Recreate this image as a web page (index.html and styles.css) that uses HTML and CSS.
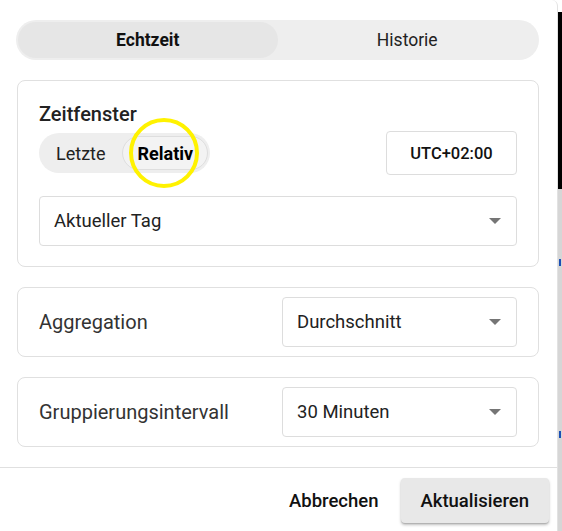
FILE: index.html
```html
<!DOCTYPE html>
<html lang="de">
<head>
<meta charset="utf-8">
<link rel="stylesheet" href="styles.css">
</head>
<body>
<div class="screen">
  <div class="dialog">
    <div class="content">
      <div class="tabs">
        <div class="tab active">Echtzeit</div>
        <div class="tab">Historie</div>
      </div>

      <div class="card card-window">
        <div class="card-title">Zeitfenster</div>
        <div class="window-row">
          <div class="toggle">
            <div class="toggle-item">Letzte</div>
            <div class="toggle-item selected">Relativ<span class="highlight"></span></div>
          </div>
          <div class="tz-box">UTC+02:00</div>
        </div>
        <div class="select select-full">
          <span class="select-value">Aktueller Tag</span>
          <span class="caret"></span>
        </div>
      </div>

      <div class="card card-row">
        <div class="row-label">Aggregation</div>
        <div class="select select-half">
          <span class="select-value">Durchschnitt</span>
          <span class="caret"></span>
        </div>
      </div>

      <div class="card card-row">
        <div class="row-label">Gruppierungsintervall</div>
        <div class="select select-half">
          <span class="select-value">30 Minuten</span>
          <span class="caret"></span>
        </div>
      </div>
    </div>
    <div class="footer">
      <button class="btn btn-text">Abbrechen</button>
      <button class="btn btn-raised">Aktualisieren</button>
    </div>
  </div>
  <div class="backdrop">
    <div class="backdrop-dark"></div>
    <div class="backdrop-light">
      <span class="dot dot-1"></span>
      <span class="dot dot-2"></span>
    </div>
  </div>
</div>
</body>
</html>
```

FILE: styles.css
```css
* { box-sizing: border-box; }

html, body {
  margin: 0;
  padding: 0;
  height: 100%;
}

body {
  font-family: Roboto, "Liberation Sans", Arial, sans-serif;
  color: #212121;
  background: #ffffff;
}

.screen {
  display: flex;
  height: 531px;
  overflow: hidden;
}

.dialog {
  width: 558px;
  flex: none;
  background: #ffffff;
  border-top-right-radius: 6px;
  border-right: 1px solid #e2e2e2;
  display: flex;
  flex-direction: column;
}

.content {
  padding: 20px 18px 0 16px;
}

.tabs {
  display: flex;
  height: 40px;
  background: #eeeeee;
  border-radius: 20px;
  padding: 2px;
}

.tab {
  flex: 1;
  display: flex;
  align-items: center;
  justify-content: center;
  font-size: 17.5px;
  color: #222222;
  border-radius: 18px;
}

.tab.active {
  background: #e6e6e6;
  font-weight: 700;
  color: #111111;
}

.card {
  border: 1px solid #e0e0e0;
  border-radius: 8px;
  margin-left: 1px;
  margin-top: 20px;
}

.card-window {
  padding: 22px 21px 20px 21px;
}

.card-title {
  font-size: 20px;
  font-weight: 500;
  line-height: 23px;
  color: #222222;
}

.window-row {
  display: flex;
  align-items: center;
  justify-content: space-between;
  margin-top: 5px;
  height: 44px;
}

.toggle {
  display: flex;
  align-items: center;
  height: 40px;
  background: #eeeeee;
  border-radius: 20px;
  padding: 2px 2px 2px 0;
}

.toggle-item {
  height: 34px;
  display: flex;
  align-items: center;
  padding: 0 16px 0 17px;
  font-size: 18px;
  color: #222222;
  border-radius: 18px;
}

.toggle-item.selected {
  position: relative;
  background: #f3f3f3;
  border: 1px solid #dedede;
  font-weight: 700;
  color: #000000;
  padding: 0 14px 0 15px;
}

.highlight {
  position: absolute;
  left: 6px;
  top: -19px;
  width: 70px;
  height: 70px;
  border: 4px solid #fff200;
  border-radius: 50%;
  pointer-events: none;
}

.tz-box {
  height: 44px;
  width: 131px;
  border: 1px solid #dddddd;
  border-radius: 4px;
  display: flex;
  align-items: center;
  justify-content: center;
  font-size: 16.5px;
  font-weight: 500;
  color: #111111;
}

.select {
  height: 50px;
  border: 1px solid #dddddd;
  border-radius: 4px;
  display: flex;
  align-items: center;
  justify-content: space-between;
  padding: 0 15px 0 14px;
}

.select-full {
  margin-top: 21px;
}

.select-value {
  font-size: 18.5px;
  color: #222222;
}

.caret {
  width: 0;
  height: 0;
  border-left: 6px solid transparent;
  border-right: 6px solid transparent;
  border-top: 6px solid #757575;
}

.card-row {
  padding: 9px 21px 9px 21px;
  display: flex;
  align-items: center;
  justify-content: space-between;
}

.row-label {
  font-size: 20px;
  color: #333333;
}

.select-half {
  width: 235px;
  height: 50px;
}

.footer {
  margin-top: 20px;
  border-top: 1px solid #e0e0e0;
  display: flex;
  justify-content: flex-end;
  align-items: center;
  gap: 6px;
  padding: 10px 8px 0 0;
}

.btn {
  font-family: Roboto, "Liberation Sans", Arial, sans-serif;
  font-size: 18.5px;
  font-weight: 500;
  color: #111111;
  border: none;
  background: transparent;
  height: 45px;
  padding: 0 16px;
  border-radius: 4px;
}

.btn-raised {
  padding: 0 20px;
  background: #e8e8e8;
  box-shadow: 0 2px 3px rgba(0,0,0,0.25), 0 1px 1px rgba(0,0,0,0.12);
}

.backdrop {
  flex: 1;
  display: flex;
  flex-direction: column;
  background: #ffffff;
}

.backdrop-dark {
  height: 177px;
  margin-top: 12px;
  background: #000000;
}

.backdrop-light {
  flex: 1;
  position: relative;
  background: #d6d6d6;
}

.dot {
  position: absolute;
  left: 1px;
  width: 2px;
  height: 7px;
  background: #1a4fb5;
}

.dot-1 { top: 70px; }
.dot-2 { top: 242px; }
```
